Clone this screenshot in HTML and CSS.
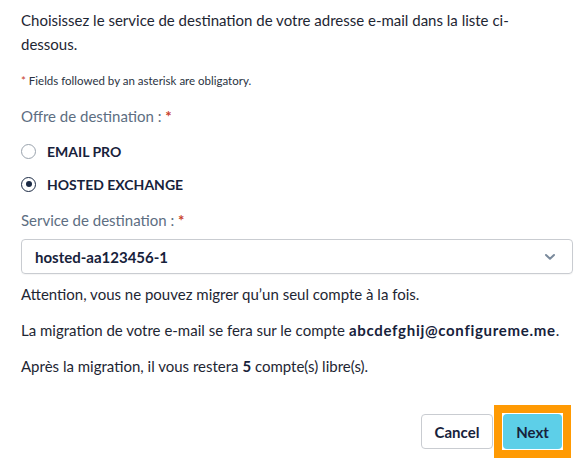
FILE: index.html
```html
<!DOCTYPE html>
<html lang="fr">
<head>
<meta charset="utf-8">
<link rel="stylesheet" href="styles.css">
</head>
<body>
<form class="wizard">
  <p class="intro">Choisissez le service de destination de votre adresse e-mail dans la liste ci-<br>dessous.</p>
  <p class="note"><span class="req">*</span> Fields followed by an asterisk are obligatory.</p>

  <div class="field-label">Offre de destination : <span class="req">*</span></div>
  <div class="radios">
    <label class="radio">
      <span class="radio-dot"></span>
      <span class="radio-text">EMAIL PRO</span>
    </label>
    <label class="radio checked">
      <span class="radio-dot"></span>
      <span class="radio-text">HOSTED EXCHANGE</span>
    </label>
  </div>

  <div class="field-label service">Service de destination : <span class="req">*</span></div>
  <div class="select">
    <span class="select-value">hosted-aa123456-1</span>
    <svg class="chevron" width="12" height="8" viewBox="0 0 12 8"><path d="M2 2 L6 5.8 L10 2" fill="none" stroke="#7a8a9c" stroke-width="2" stroke-linecap="round" stroke-linejoin="round"/></svg>
  </div>

  <p class="info first">Attention, vous ne pouvez migrer qu’un seul compte à la fois.</p>
  <p class="info">La migration de votre e-mail se fera sur le compte <strong class="email">abcdefghij@configureme.me</strong>.</p>
  <p class="info">Après la migration, il vous restera <strong>5</strong> compte(s) libre(s).</p>

  <div class="actions">
    <button type="button" class="btn btn-cancel">Cancel</button>
    <span class="focus-ring"><button type="button" class="btn btn-next">Next</button></span>
  </div>
</form>
</body>
</html>
```

FILE: styles.css
```css
html, body {
  margin: 0;
  padding: 0;
  background: #ffffff;
}

body {
  font-family: "Lato", "Open Sans", sans-serif;
  color: #1e2633;
  font-size: 15px;
}

.wizard {
  width: 552px;
  padding: 8px 0 0 21px;
}

p {
  margin: 0;
}

.intro {
  line-height: 24px;
}

.note {
  margin-top: 17px;
  font-size: 11.5px;
  line-height: 16px;
  color: #2a3342;
}

.req {
  color: #c8402a;
  font-weight: 700;
}

.note .req {
  font-weight: 400;
}

.field-label {
  margin-top: 15px;
  line-height: 24px;
  color: #5d6e82;
}

.field-label.service {
  margin-top: 12px;
}

.radios {
  margin-top: 11px;
  display: flex;
  flex-direction: column;
  gap: 9px;
}

.radio {
  display: flex;
  align-items: center;
  gap: 11px;
  height: 24px;
}

.radio-dot {
  box-sizing: border-box;
  width: 15px;
  height: 15px;
  border-radius: 50%;
  border: 1px solid #9aa3ad;
  display: flex;
  align-items: center;
  justify-content: center;
  background: #fff;
}

.radio.checked .radio-dot {
  border: 1.5px solid #1b2a44;
}

.radio.checked .radio-dot::after {
  content: "";
  width: 6px;
  height: 6px;
  border-radius: 50%;
  background: #1b2a44;
}

.radio-text {
  font-weight: 700;
  font-size: 14px;
  color: #17223b;
}

.select {
  margin-top: 7px;
  box-sizing: border-box;
  height: 35px;
  border: 1px solid #c9ccd1;
  border-radius: 4px;
  display: flex;
  align-items: center;
  justify-content: space-between;
  padding: 0 16px 0 13px;
  box-shadow: 0 1px 1px rgba(0, 0, 0, 0.04);
}

.select-value {
  font-weight: 700;
  color: #17223b;
}

.info {
  line-height: 24px;
  margin-top: 12px;
}

.info.first {
  margin-top: 8px;
}

.info strong {
  color: #17223b;
}

.info .email {
  letter-spacing: 0.7px;
}

.actions {
  margin-top: 27px;
  display: flex;
  justify-content: flex-end;
  align-items: center;
  gap: 1px;
  padding-right: 2px;
}

.btn {
  font-family: inherit;
  font-size: 15px;
  font-weight: 700;
  height: 35px;
  border-radius: 4px;
  color: #17223b;
  cursor: pointer;
  padding: 0;
}

.btn-cancel {
  width: 72px;
  background: #fff;
  border: 1px solid #c9ccd1;
}

.focus-ring {
  display: flex;
  border: 8px solid #ff9a03;
  padding: 1px;
  background: #fff;
}

.btn-next {
  width: 59px;
  background: #5dcfe8;
  border: none;
}
```
